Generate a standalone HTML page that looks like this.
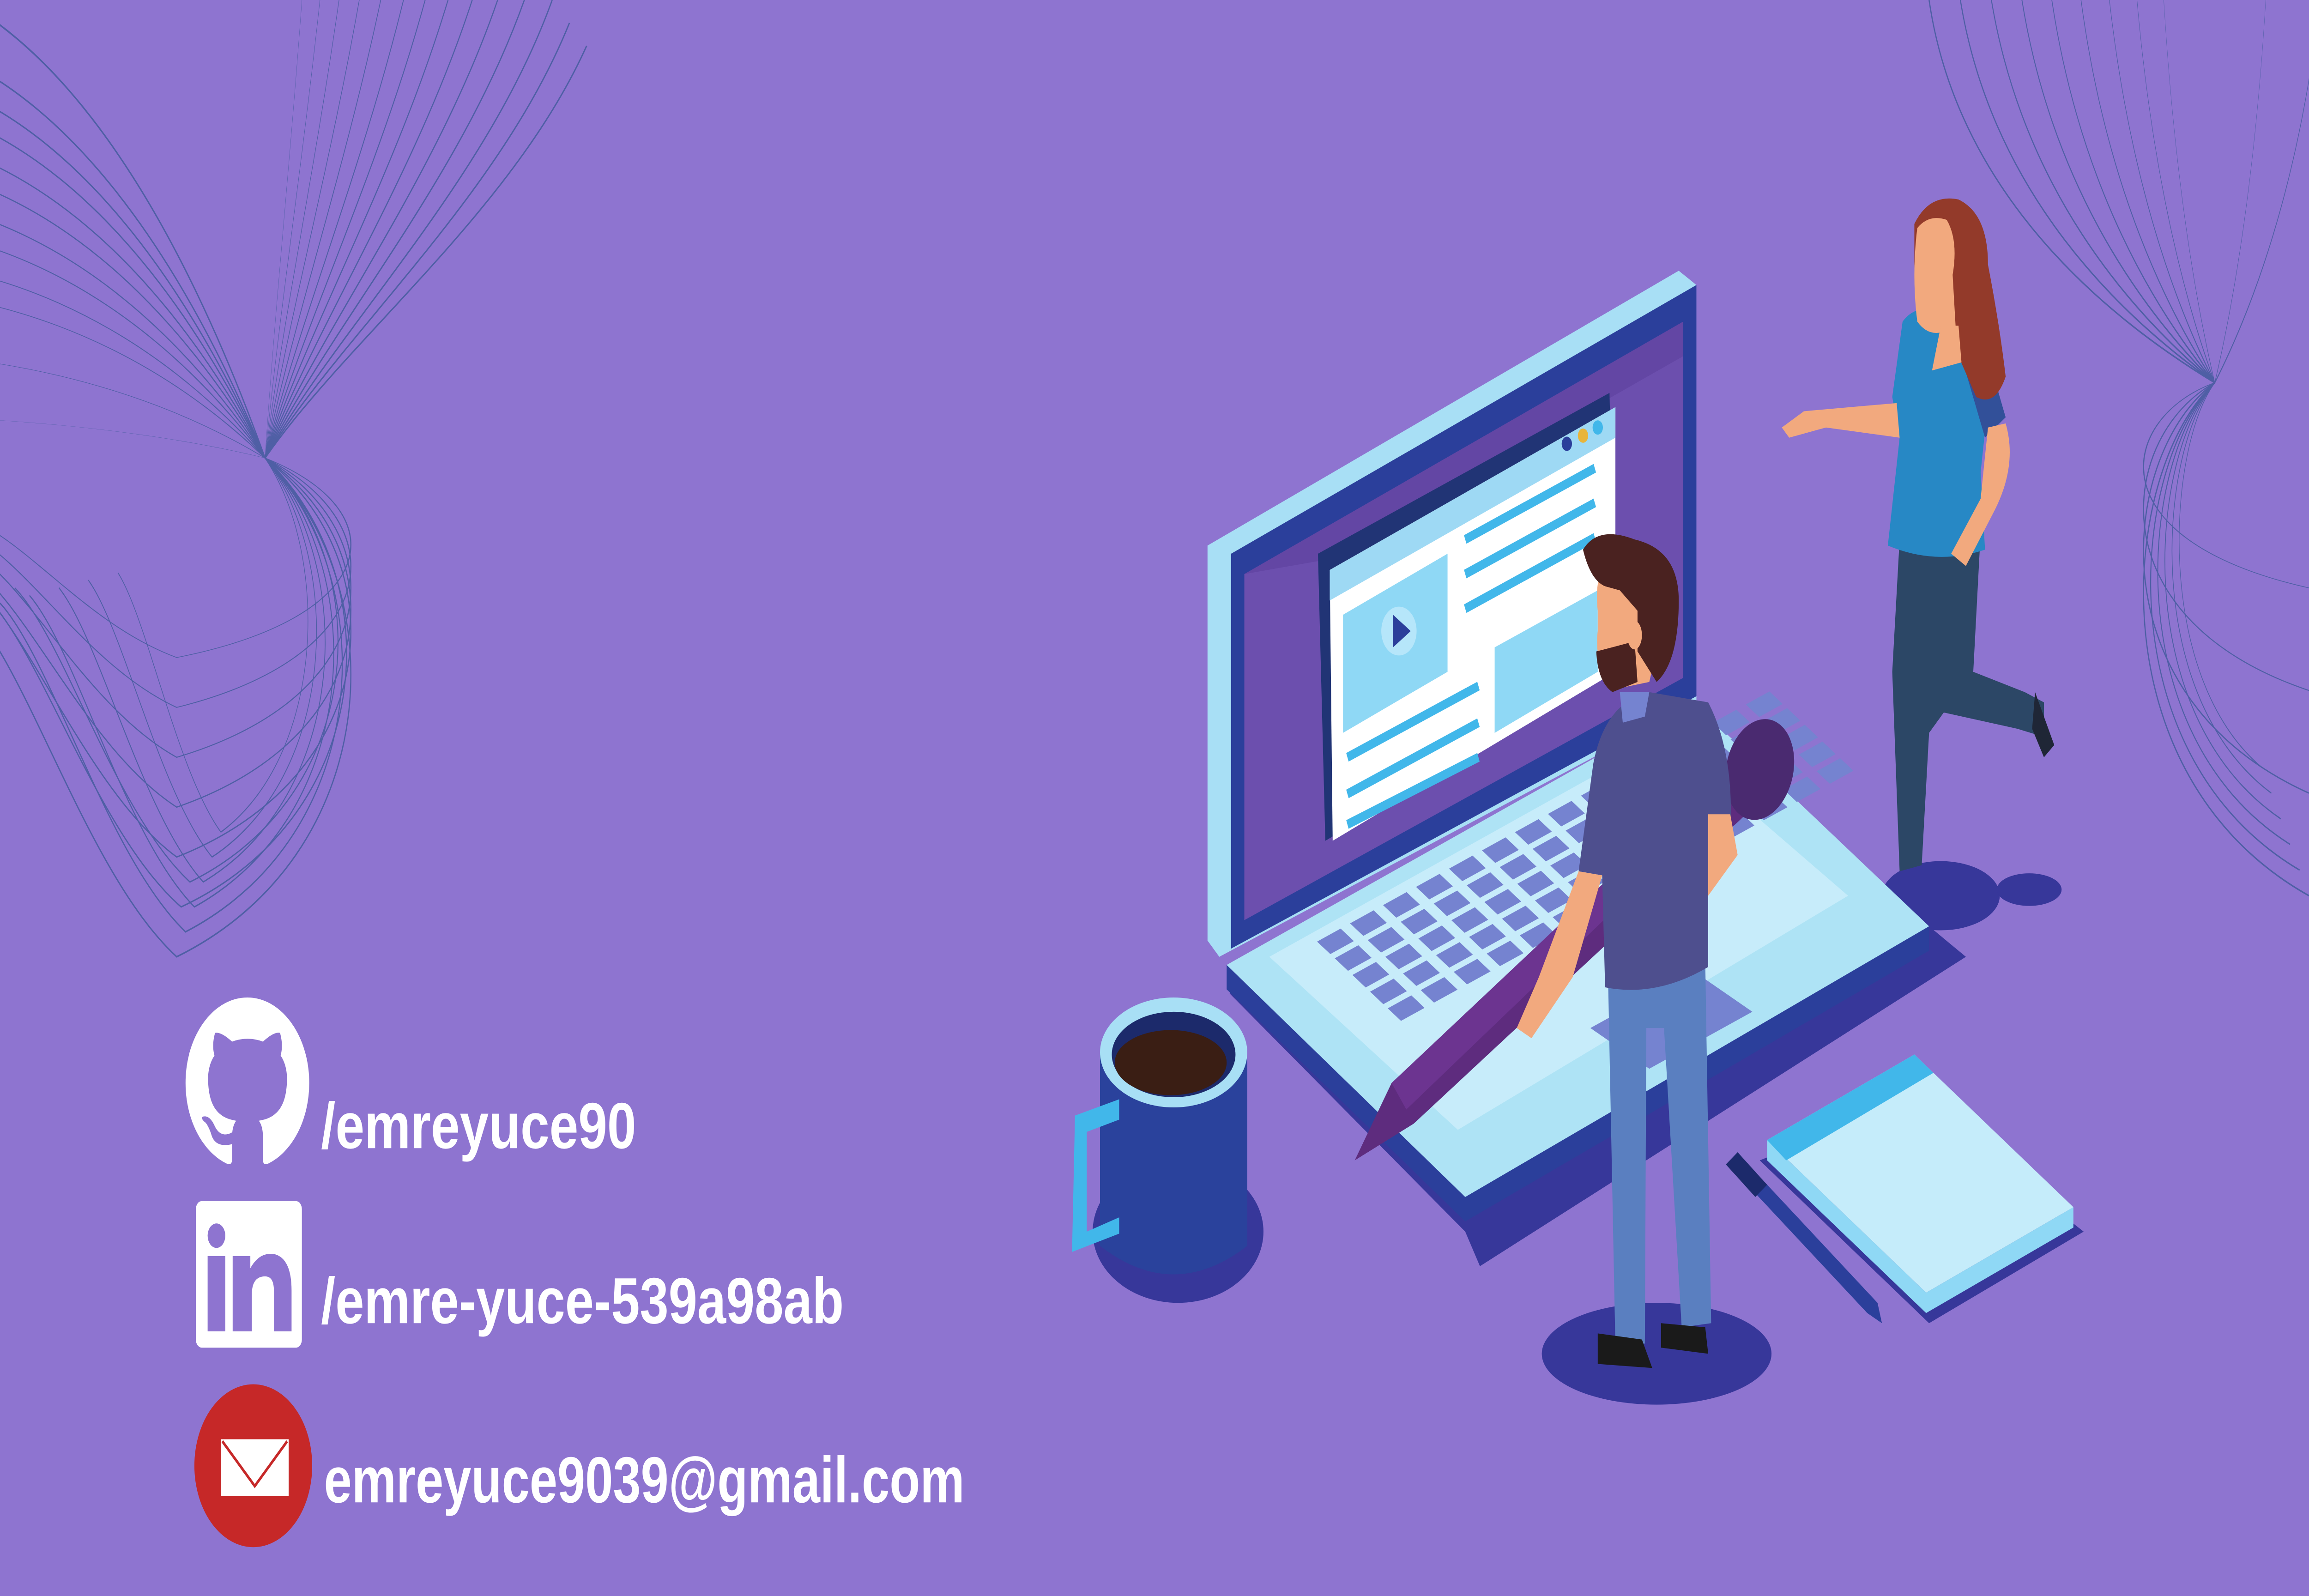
<!DOCTYPE html>
<html><head><meta charset="utf-8"><style>
html,body{margin:0;padding:0;background:#8e74d0;overflow:hidden;width:100vw;height:100vh}
svg{display:block;position:fixed;left:0;top:0;width:100vw;height:100vh}
</style></head><body>
<svg viewBox="0 0 1568 784" preserveAspectRatio="none" xmlns="http://www.w3.org/2000/svg">
<defs>
<path id="lt" d="M180,225 C230,160 330,90 375,0" fill="none"/>
<path id="ll" d="M180,225 C120,120 40,40 -60,20" fill="none"/>
<path id="lb" d="M180,225 C270,290 260,420 120,470 C60,430 20,330 -20,300" fill="none"/>
<path id="rt" d="M1504,188 C1440,160 1330,100 1310,0" fill="none"/>
<path id="rb" d="M1504,188 C1440,230 1420,380 1568,440" fill="none"/>
</defs>
<rect width="1568" height="784" fill="#8e74d0"/>
<g stroke="#4f5fa5" stroke-width="0.8" fill="none">
<use href="#lt" transform="translate(180 225) scale(1.0) translate(-180 -225)"/>
<use href="#lt" transform="translate(180 225) scale(0.93,1.05) translate(-180 -225)"/>
<use href="#lt" transform="translate(180 225) scale(0.86,1.1) translate(-180 -225)"/>
<use href="#lt" transform="translate(180 225) scale(0.79,1.15) translate(-180 -225)"/>
<use href="#lt" transform="translate(180 225) scale(0.72,1.2) translate(-180 -225)"/>
<use href="#lt" transform="translate(180 225) scale(0.65,1.25) translate(-180 -225)"/>
<use href="#lt" transform="translate(180 225) scale(0.58,1.3) translate(-180 -225)"/>
<use href="#lt" transform="translate(180 225) scale(0.5,1.35) translate(-180 -225)"/>
<use href="#lt" transform="translate(180 225) scale(0.42,1.4) translate(-180 -225)"/>
<use href="#lt" transform="translate(180 225) scale(0.34,1.45) translate(-180 -225)"/>
<use href="#lt" transform="translate(180 225) scale(0.26,1.5) translate(-180 -225)"/>
<use href="#lt" transform="translate(180 225) scale(0.18,1.55) translate(-180 -225)"/>
<use href="#lt" transform="translate(180 225) scale(1.06,0.95) translate(-180 -225)"/>
<use href="#lt" transform="translate(180 225) scale(1.12,0.9) translate(-180 -225)"/>
<use href="#ll" transform="translate(180 225) scale(1,1) translate(-180 -225)"/>
<use href="#ll" transform="translate(180 225) scale(1,0.85) translate(-180 -225)"/>
<use href="#ll" transform="translate(180 225) scale(1,0.7) translate(-180 -225)"/>
<use href="#ll" transform="translate(180 225) scale(1,0.55) translate(-180 -225)"/>
<use href="#ll" transform="translate(180 225) scale(1,0.4) translate(-180 -225)"/>
<use href="#ll" transform="translate(180 225) scale(1,0.25) translate(-180 -225)"/>
<use href="#ll" transform="translate(180 225) scale(1,0.1) translate(-180 -225)"/>
<use href="#ll" transform="translate(180 225) scale(1,1.15) translate(-180 -225)"/>
<use href="#ll" transform="translate(180 225) scale(1,0.92) translate(-180 -225)"/>
<use href="#ll" transform="translate(180 225) scale(1,0.77) translate(-180 -225)"/>
<use href="#ll" transform="translate(180 225) scale(1,0.62) translate(-180 -225)"/>
<use href="#ll" transform="translate(180 225) scale(1,0.47) translate(-180 -225)"/>
<use href="#lb" transform="translate(180 225) scale(1,1) translate(-180 -225)"/>
<use href="#lb" transform="translate(180 225) scale(0.9,0.95) translate(-180 -225)"/>
<use href="#lb" transform="translate(180 225) scale(0.8,0.9) translate(-180 -225)"/>
<use href="#lb" transform="translate(180 225) scale(0.7,0.85) translate(-180 -225)"/>
<use href="#lb" transform="translate(180 225) scale(0.6,0.8) translate(-180 -225)"/>
<use href="#lb" transform="translate(180 225) scale(0.5,0.75) translate(-180 -225)"/>
<use href="#lb" transform="translate(180 225) scale(1,0.8) translate(-180 -225)"/>
<use href="#lb" transform="translate(180 225) scale(1,0.6) translate(-180 -225)"/>
<use href="#lb" transform="translate(180 225) scale(1,0.4) translate(-180 -225)"/>
<use href="#lb" transform="translate(180 225) scale(0.95,0.9) translate(-180 -225)"/>
<use href="#lb" transform="translate(180 225) scale(0.85,0.85) translate(-180 -225)"/>
<use href="#lb" transform="translate(180 225) scale(1,0.7) translate(-180 -225)"/>
<use href="#lb" transform="translate(180 225) scale(1,0.5) translate(-180 -225)"/>
<use href="#rt" transform="translate(1504 188) scale(1,1) translate(-1504 -188)"/>
<use href="#rt" transform="translate(1504 188) scale(0.9,1.05) translate(-1504 -188)"/>
<use href="#rt" transform="translate(1504 188) scale(0.8,1.1) translate(-1504 -188)"/>
<use href="#rt" transform="translate(1504 188) scale(0.7,1.15) translate(-1504 -188)"/>
<use href="#rt" transform="translate(1504 188) scale(0.6,1.2) translate(-1504 -188)"/>
<use href="#rt" transform="translate(1504 188) scale(0.5,1.25) translate(-1504 -188)"/>
<use href="#rt" transform="translate(1504 188) scale(0.4,1.3) translate(-1504 -188)"/>
<use href="#rt" transform="translate(1504 188) scale(0.3,1.35) translate(-1504 -188)"/>
<use href="#rt" transform="translate(1504 188) scale(0.2,1.4) translate(-1504 -188)"/>
<use href="#rt" transform="translate(1504 188) scale(-0.2,1.4) translate(-1504 -188)"/>
<use href="#rt" transform="translate(1504 188) scale(-0.4,1.3) translate(-1504 -188)"/>
<use href="#rb" transform="translate(1504 188) scale(1,1) translate(-1504 -188)"/>
<use href="#rb" transform="translate(1504 188) scale(0.9,0.95) translate(-1504 -188)"/>
<use href="#rb" transform="translate(1504 188) scale(0.8,0.9) translate(-1504 -188)"/>
<use href="#rb" transform="translate(1504 188) scale(0.7,0.85) translate(-1504 -188)"/>
<use href="#rb" transform="translate(1504 188) scale(0.6,0.8) translate(-1504 -188)"/>
<use href="#rb" transform="translate(1504 188) scale(0.5,0.75) translate(-1504 -188)"/>
<use href="#rb" transform="translate(1504 188) scale(1,0.8) translate(-1504 -188)"/>
<use href="#rb" transform="translate(1504 188) scale(1,0.6) translate(-1504 -188)"/>
<use href="#rb" transform="translate(1504 188) scale(1,0.4) translate(-1504 -188)"/>
</g>

<!-- shadows -->
<polygon points="835,488 995,605 1005,622 1335,470 1310,455" fill="#37379a"/>
<ellipse cx="1125" cy="665" rx="78" ry="25" fill="#37379a"/>
<ellipse cx="1318" cy="440" rx="40" ry="17" fill="#37379a"/>
<ellipse cx="1378" cy="437" rx="22" ry="8" fill="#37379a"/>
<ellipse cx="800" cy="605" rx="58" ry="35" fill="#37379a"/>
<polygon points="1195,570 1310,650 1415,605 1300,540" fill="#37379a"/>

<!-- laptop base -->
<polygon points="833,474 995,588 995,600 833,486" fill="#2b3f9b"/>
<polygon points="995,588 1310,455 1310,467 995,600" fill="#2b3f9b"/>
<polygon points="833,474 1150,345 1310,455 995,588" fill="#aee3f5"/>
<polygon points="862,470 1130,362 1255,440 990,555" fill="#c7ecfa"/>
<g transform="matrix(320,-128,60,41,890,463)" fill="#7583d0">
<path id="krow" d="M0.01,0.02h0.05v0.15h-0.05zM0.08,0.02h0.05v0.15h-0.05zM0.15,0.02h0.05v0.15h-0.05zM0.22,0.02h0.05v0.15h-0.05zM0.29,0.02h0.05v0.15h-0.05zM0.36,0.02h0.05v0.15h-0.05zM0.43,0.02h0.05v0.15h-0.05zM0.5,0.02h0.05v0.15h-0.05zM0.57,0.02h0.05v0.15h-0.05zM0.64,0.02h0.05v0.15h-0.05zM0.71,0.02h0.05v0.15h-0.05zM0.78,0.02h0.05v0.15h-0.05zM0.85,0.02h0.05v0.15h-0.05zM0.92,0.02h0.05v0.15h-0.05z"/>
<use href="#krow" transform="translate(0,0.2)"/>
<use href="#krow" transform="translate(0,0.4)"/>
<use href="#krow" transform="translate(0,0.6)"/>
<use href="#krow" transform="translate(0,0.8)"/>
</g>
<polygon points="1080,505 1150,477 1190,497 1120,525" fill="#7583d0"/>

<!-- lid -->
<polygon points="820,268 1140,133 1152,140 1152,345 828,470 820,462" fill="#a8dff5"/>
<polygon points="836,272 1152,140 1152,342 836,466" fill="#2b3f9b"/>
<polygon points="845,282 1143,158 1143,333 845,452" fill="#6c4fae"/>
<polygon points="845,282 1143,158 1143,175 900,275" fill="#6346a4"/>
<!-- window -->
<polygon points="895,272 1093,193 1097,330 900,413" fill="#213475"/>
<polygon points="903,280 1097,200 1097,330 905,413" fill="#ffffff"/>
<polygon points="903,280 1097,200 1097,215 903,295" fill="#9ed9f4"/>
<circle cx="1064" cy="218" r="3.5" fill="#2b3f9b"/>
<circle cx="1075" cy="214" r="3.5" fill="#e8b53a"/>
<circle cx="1085" cy="210" r="3.5" fill="#41b7ea"/>
<polygon points="912,302 983,272 983,330 912,360" fill="#8fd8f5"/>
<circle cx="950" cy="310" r="12" fill="#b6e6fa"/>
<polygon points="946,302 946,318 958,310" fill="#2b3f9b"/>
<g stroke="#41b7ea" stroke-width="4.5">
<line x1="995" y1="265" x2="1083" y2="230"/>
<line x1="995" y1="282" x2="1083" y2="247"/>
<line x1="995" y1="299" x2="1083" y2="264"/>
<line x1="915" y1="372" x2="1004" y2="337"/>
<line x1="915" y1="390" x2="1004" y2="355"/>
<line x1="915" y1="405" x2="1004" y2="372"/>
</g>
<polygon points="1015,318 1085,290 1085,330 1015,360" fill="#8fd8f5"/>

<!-- mug -->
<path d="M747,517 L747,612 Q797,640 847,612 L847,517 Z" fill="#2a429c"/>
<path d="M730,548 L760,540 L760,550 L738,556 L738,605 L760,598 L760,606 L728,615 Z" fill="#41b7ea"/>
<ellipse cx="797" cy="517" rx="50" ry="27" fill="#a8dff5"/>
<ellipse cx="797" cy="518" rx="42" ry="21" fill="#1c2a6b"/>
<ellipse cx="795" cy="522" rx="38" ry="16" fill="#3a1e14"/>

<!-- notebook -->
<polygon points="1200,560 1200,570 1308,645 1408,603 1408,593 1308,635" fill="#8fd8f5"/>
<polygon points="1200,560 1300,518 1408,593 1308,635" fill="#c5ecfa"/>
<polygon points="1200,560 1300,518 1313,527 1213,570" fill="#41b7ea"/>
<path d="M1175,573 L1182,568 L1275,640 L1278,650 L1268,645 Z" fill="#2b3f9b"/>
<path d="M1172,572 L1180,566 L1200,582 L1192,588 Z" fill="#1c2a6b"/>

<!-- big pen -->
<path d="M920,570 L945,532 L1190,365 L1208,385 L960,552 Z" fill="#5e2c7e"/>
<path d="M945,532 L1190,365 L1200,375 L955,545 Z" fill="#6c3490"/>
<ellipse cx="1195" cy="378" rx="22" ry="26" fill="#4a2a70" transform="rotate(35 1195 378)"/>

<!-- man -->
<path d="M1092,480 L1158,472 L1162,650 L1142,652 L1130,505 L1118,505 L1117,660 L1097,662 Z" fill="#5a7fc0"/>
<path d="M1085,655 L1115,658 L1122,672 L1085,670 Z" fill="#1a1a1a"/>
<path d="M1128,650 L1158,652 L1160,665 L1128,662 Z" fill="#1a1a1a"/>
<path d="M1082,375 Q1090,345 1120,340 L1160,345 Q1178,370 1175,410 L1160,415 L1160,475 Q1125,490 1090,485 L1088,430 L1072,428 Z" fill="#4e4f8e"/>
<path d="M1072,428 L1088,430 L1068,480 L1040,510 L1030,505 L1045,480 Z" fill="#f2a97e"/>
<path d="M1160,400 L1175,400 L1180,420 L1160,440 Z" fill="#f2a97e"/>
<path d="M1100,340 L1120,340 L1117,352 L1102,355 Z" fill="#7583d0"/>
<path d="M1085,300 Q1082,280 1095,275 L1120,280 L1128,310 L1120,335 L1100,338 Q1082,330 1085,310 Z" fill="#f2a97e"/>
<path d="M1075,270 Q1085,258 1110,265 Q1140,270 1140,295 Q1140,325 1125,335 L1112,320 L1112,300 L1100,290 L1090,288 Q1080,285 1075,270 Z" fill="#4a2220"/>
<path d="M1084,320 Q1095,318 1110,315 L1112,335 L1095,340 Q1085,335 1084,320 Z" fill="#4a2220"/>
<ellipse cx="1110" cy="312" rx="5" ry="7" fill="#f2a97e"/>

<!-- woman -->
<path d="M1290,265 L1345,262 L1340,330 L1375,340 L1388,345 L1388,362 L1370,358 L1320,350 L1310,360 L1305,425 L1290,428 L1285,330 Z" fill="#2c4766"/>
<path d="M1382,340 L1395,366 L1388,372 L1380,358 Z" fill="#1f2636"/>
<path d="M1292,158 Q1300,150 1315,152 L1340,160 L1352,185 L1345,232 L1348,270 Q1315,278 1282,268 L1290,215 L1285,195 Z" fill="#2788c5"/>
<path d="M1333,178 L1352,180 L1362,205 L1348,215 Z" fill="#325099"/>
<path d="M1350,210 L1362,208 Q1370,228 1355,250 L1335,278 L1325,272 L1345,245 Z" fill="#f2a97e"/>
<path d="M1288,198 L1290,215 L1240,210 L1215,215 L1210,210 L1225,202 Z" fill="#f2a97e"/>
<path d="M1300,110 Q1310,95 1330,98 Q1350,105 1350,130 Q1358,160 1362,185 Q1355,200 1342,195 L1330,175 L1320,165 Q1302,155 1300,130 Z" fill="#933a2a"/>
<path d="M1302,112 Q1310,105 1322,108 Q1330,118 1326,135 L1328,160 Q1312,168 1302,158 Q1298,135 1302,112 Z" fill="#f2a97e"/>
<path d="M1318,160 L1330,160 L1332,178 L1312,182 Z" fill="#f2a97e"/>

<!-- icons -->
<g transform="translate(126,490) scale(5.25)">
<path fill="#ffffff" fill-rule="evenodd" d="M8 0C3.58 0 0 3.58 0 8c0 3.54 2.29 6.53 5.47 7.59.4.07.55-.17.55-.38 0-.19-.01-.82-.01-1.49-2.01.37-2.53-.49-2.690-.94-.09-.23-.48-.94-.82-1.13-.28-.15-.68-.52-.01-.53.63-.01 1.08.58 1.23.82.72 1.21 1.87.87 2.33.66.07-.52.28-.87.51-1.07-1.78-.2-3.64-.89-3.64-3.95 0-.87.31-1.59.82-2.15-.08-.2-.36-1.02.08-2.12 0 0 .67-.21 2.2.82.64-.18 1.32-.27 2-.27.68 0 1.36.09 2 .27 1.53-1.04 2.2-.82 2.2-.82.44 1.1.16 1.92.08 2.12.51.56.82 1.27.82 2.15 0 3.07-1.87 3.75-3.65 3.95.29.25.54.73.54 1.48 0 1.07-.01 1.93-.01 2.2 0 .21.15.46.55.38A8.013 8.013 0 0016 8c0-4.42-3.58-8-8-8z"/>
</g>
<rect x="133" y="590" width="72" height="72" rx="4" fill="#ffffff"/>
<circle cx="147" cy="607" r="6" fill="#8e74d0"/>
<rect x="141" y="617" width="12" height="37" fill="#8e74d0"/>
<path d="M158,617 H170 V623 Q176,615 186,616 Q198,618 198,634 V654 H186 V634 Q186,627 180,627 Q171,627 171,636 V654 H158 Z" fill="#8e74d0"/>
<ellipse cx="172" cy="720" rx="40" ry="40" fill="#c62828"/>
<rect x="150" y="707" width="46" height="28" fill="#ffffff"/>
<polyline points="151,708 173,730 195,708" fill="none" stroke="#c62828" stroke-width="1.5"/>

<g fill="#ffffff" font-family="Liberation Sans, sans-serif" font-weight="bold" font-size="32">
<text x="218" y="564" textLength="214" lengthAdjust="spacingAndGlyphs">/emreyuce90</text>
<text x="218" y="650" textLength="355" lengthAdjust="spacingAndGlyphs">/emre-yuce-539a98ab</text>
<text x="220" y="738" textLength="435" lengthAdjust="spacingAndGlyphs">emreyuce9039@gmail.com</text>
</g>
</svg>
</body></html>
